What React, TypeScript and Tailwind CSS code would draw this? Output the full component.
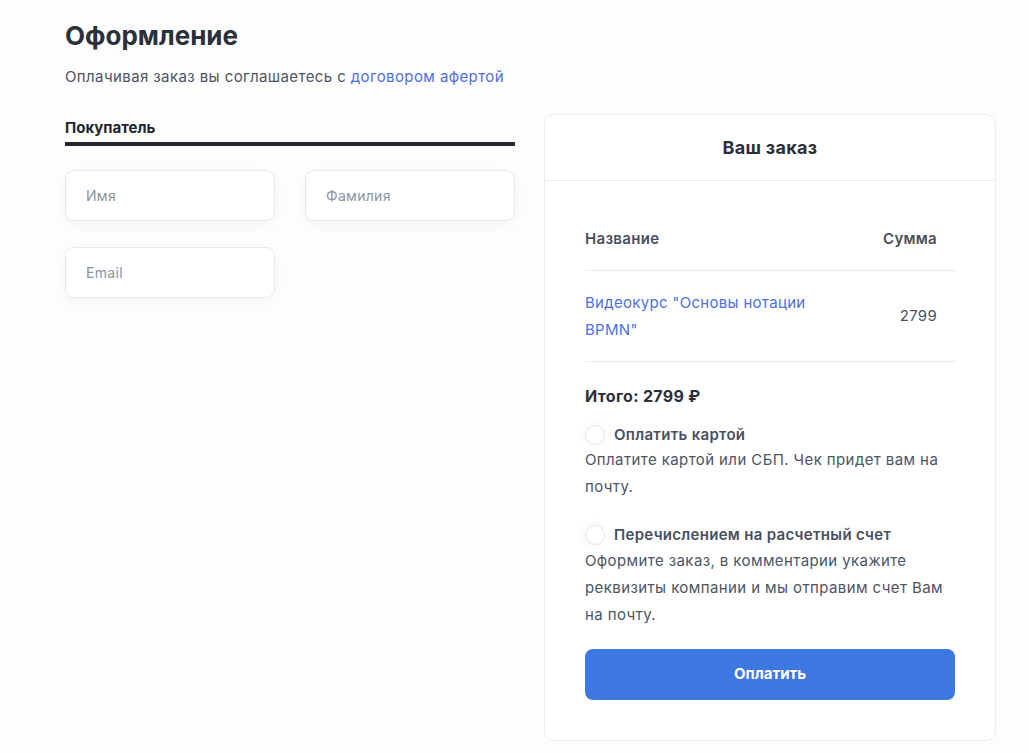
import React from "react";

const Field = ({ placeholder }: { placeholder: string }) => (
  <input
    placeholder={placeholder}
    className="h-[51px] w-full rounded-[9px] border border-[#e6e7f1] bg-white px-[20px] text-[14px] tracking-[0.3px] text-[#2b2f3a] placeholder:text-[#8c93a0] shadow-[0_4px_16px_rgba(40,45,80,0.04)] outline-none"
  />
);

const Radio = ({ label }: { label: string }) => (
  <label className="flex items-center gap-[9px]">
    <span className="h-[20px] w-[20px] rounded-full border border-[#e3e4ee] bg-white shadow-[0_0_12px_rgba(40,45,80,0.05)]" />
    <span className="text-[15px] font-semibold tracking-[0.3px] text-[#4a4f5c]">{label}</span>
  </label>
);

export default function App() {
  return (
    <div className="min-h-screen bg-[#fdfdfe] font-['Inter',sans-serif] text-[#2b2f3a]">
      <div className="pl-[65px] pt-[18px]">
        <h1 className="text-[26px] font-bold leading-[36px] text-[#2b303b]">Оформление</h1>
        <p className="mt-[13px] text-[15px] leading-[20px] tracking-[0.4px] text-[#4d5463]">
          Оплачивая заказ вы соглашаетесь с{" "}
          <a href="#" className="text-[#4d6fe3]">договором афертой</a>
        </p>

        <div className="mt-[27px] flex gap-[29px]">
          <div className="w-[450px] shrink-0 pt-[4px]">
            <div className="border-b-[4px] border-[#22252d] pb-[4px] text-[15px] font-bold leading-[20px] text-[#22252d]">
              Покупатель
            </div>
            <div className="mt-[24px] grid grid-cols-2 gap-x-[30px] gap-y-[26px]">
              <Field placeholder="Имя" />
              <Field placeholder="Фамилия" />
              <Field placeholder="Email" />
            </div>
          </div>

          <div className="w-[452px] shrink-0 rounded-[10px] border border-[#ebebf2] bg-white">
            <div className="flex h-[66px] items-center justify-center border-b border-[#ebebf2] text-[18px] font-bold tracking-[0.3px] text-[#2b2f3a]">
              Ваш заказ
            </div>
            <div className="px-[40px] pb-[40px] pt-[47px]">
              <div className="flex justify-between border-b border-[#e9eaf0] pb-[19px] pr-[18px] text-[15px] font-semibold tracking-[0.3px] text-[#4a4f5c]">
                <span>Название</span>
                <span>Сумма</span>
              </div>
              <div className="flex items-center justify-between border-b border-[#e9eaf0] py-[18px] pr-[18px] text-[15px] leading-[27px] tracking-[0.3px]">
                <a href="#" className="w-[240px] text-[#4d6fe3]">Видеокурс "Основы нотации BPMN"</a>
                <span className="text-[#4a4f5c]">2799</span>
              </div>
              <div className="mt-[22px] text-[16px] font-bold tracking-[0.3px] text-[#2b2f3a]">Итого: 2799 ₽</div>
              <div className="mt-[16px]">
                <Radio label="Оплатить картой" />
                <p className="text-[15px] leading-[27px] tracking-[0.4px] text-[#4d5463]">
                  Оплатите картой или СБП. Чек придет вам на почту.
                </p>
              </div>
              <div className="mt-[24px]">
                <Radio label="Перечислением на расчетный счет" />
                <p className="text-[15px] leading-[27px] tracking-[0.4px] text-[#4d5463]">
                  Оформите заказ, в комментарии укажите реквизиты компании и мы отправим счет Вам на почту.
                </p>
              </div>
              <button className="mt-[21px] h-[51px] w-full rounded-[8px] bg-[#3d78e0] text-[15px] font-bold text-white">
                Оплатить
              </button>
            </div>
          </div>
        </div>
      </div>
    </div>
  );
}
